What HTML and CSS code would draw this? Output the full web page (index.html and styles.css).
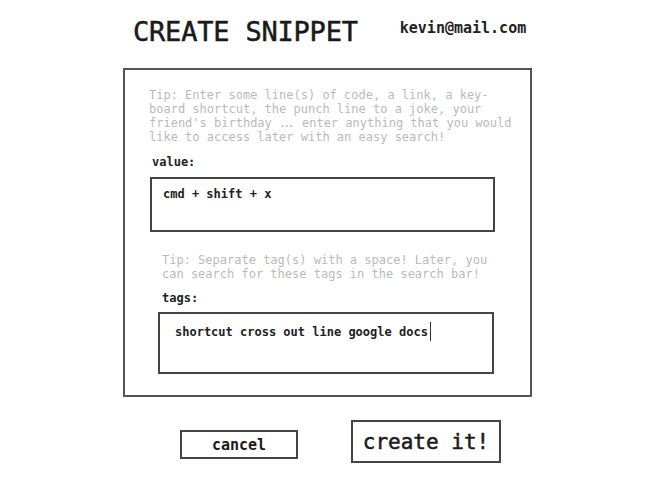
FILE: index.html
```html
<!DOCTYPE html>
<html lang="en">
<head>
<meta charset="utf-8">
<title>Create Snippet</title>
<link rel="stylesheet" href="styles.css">
</head>
<body>
<div class="page">
  <header class="header">
    <h1 class="title">CREATE SNIPPET</h1>
    <span class="user">kevin@mail.com</span>
  </header>
  <main class="panel">
    <p class="tip">Tip: Enter some line(s) of code, a link, a key-<br>board shortcut, the punch line to a joke, your<br>friend's birthday <span class="dots">...</span> enter anything that you would<br>like to access later with an easy search!</p>
    <div class="label">value:</div>
    <div class="field field-value">cmd + shift + x</div>
    <div class="tags-section">
      <p class="tip">Tip: Separate tag(s) with a space! Later, you<br>can search for these tags in the search bar!</p>
      <div class="label">tags:</div>
      <div class="field field-tags">shortcut cross out line google docs<span class="caret"></span></div>
    </div>
  </main>
  <div class="actions">
    <button class="btn btn-cancel">cancel</button>
    <button class="btn btn-create">create it!</button>
  </div>
</div>
</body>
</html>
```
FILE: styles.css
```css
* { box-sizing: border-box; }
html, body { margin: 0; padding: 0; background: #fff; }
body {
  font-family: "DejaVu Sans Mono", "Liberation Mono", monospace;
  color: #1a1a1a;
}
.page {
  width: 651px;
  height: 486px;
  padding: 0 0 0 123px;
}
.header {
  display: flex;
  align-items: center;
  height: 68px;
  padding: 0 0 4px 10px;
}
.title {
  margin: 0;
  font-size: 27px;
  font-weight: 500;
  letter-spacing: -0.2px;
  line-height: 32px;
  -webkit-text-stroke: 0.5px #1a1a1a;
}
.user {
  margin-left: 42px;
  margin-top: -8px;
  font-size: 15px;
  font-weight: bold;
  color: #222;
}
.panel {
  width: 409px;
  height: 329px;
  border: 2px solid #555;
  padding: 18px 0 0 24px;
}
.tip {
  margin: 0;
  font-size: 12px;
  line-height: 14px;
  color: #bababa;
  white-space: nowrap;
}
.dots {
  letter-spacing: -3px;
  margin-right: 3px;
}
.label {
  margin: 11px 0 0 3px;
  font-size: 12px;
  line-height: 14px;
  font-weight: bold;
  color: #222;
}
.field {
  border: 2px solid #444;
  font-size: 12px;
  line-height: 14px;
  font-weight: bold;
  color: #222;
}
.field-value {
  margin: 8px 0 0 1px;
  width: 345px;
  height: 55px;
  padding: 8px 0 0 11px;
}
.tags-section {
  padding: 21px 0 0 13px;
}
.tags-section .label {
  margin: 10px 0 0 0;
}
.field-tags {
  margin: 7px 0 0 -4px;
  height: 62px;
  width: 336px;
  padding: 8px 0 0 15px;
}
.caret {
  display: inline-block;
  width: 1px;
  height: 19px;
  margin-left: 2px;
  vertical-align: -5px;
  background: #333;
}
.actions {
  display: flex;
  align-items: center;
  height: 89px;
  padding: 0 0 0 57px;
}
.btn {
  font-family: "DejaVu Sans Mono", "Liberation Mono", monospace;
  background: #fff;
  color: #1a1a1a;
  border: 2px solid #444;
  padding: 0;
  font-weight: bold;
}
.btn-cancel {
  width: 118px;
  height: 29px;
  font-size: 15px;
  margin-top: 6px;
}
.btn-create {
  margin-left: 53px;
  width: 150px;
  height: 43px;
  font-size: 21px;
  font-weight: 500;
  -webkit-text-stroke: 0.5px #1a1a1a;
}
```
